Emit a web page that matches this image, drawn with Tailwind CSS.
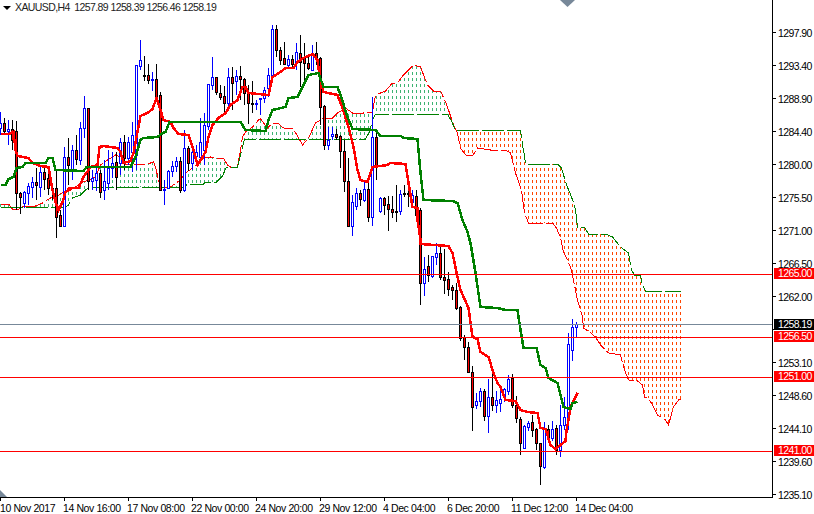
<!DOCTYPE html>
<html>
<head>
  <meta charset="UTF-8">
  <script src="https://cdn.jsdelivr.net/npm/@tailwindcss/browser@4"></script>
</head>
<body class="bg-white">
  <div class="relative w-[814px] h-[514px] overflow-hidden bg-white text-black font-['Liberation_Sans',sans-serif] text-[10.5px] leading-none tracking-[-0.6px]">
    <svg id="chart" class="absolute left-0 top-0" width="814" height="514" viewBox="0 0 814 514"></svg>

    <div class="absolute left-[3px] top-[2px] flex items-center h-[11px]">
      <span class="w-0 h-0 border-x-[4px] border-x-transparent border-t-[4px] border-t-black mr-[4px]"></span>
      <span class="text-[#222] whitespace-pre">XAUUSD,H4  1257.89 1258.39 1256.46 1258.19</span>
    </div>

    <div class="absolute left-[778px] top-[28px]">1297.90</div>
    <div class="absolute left-[778px] top-[61px]">1293.40</div>
    <div class="absolute left-[778px] top-[94px]">1288.90</div>
    <div class="absolute left-[778px] top-[127px]">1284.40</div>
    <div class="absolute left-[778px] top-[160px]">1280.00</div>
    <div class="absolute left-[778px] top-[193px]">1275.50</div>
    <div class="absolute left-[778px] top-[226px]">1271.00</div>
    <div class="absolute left-[778px] top-[259px]">1266.50</div>
    <div class="absolute left-[778px] top-[292px]">1262.00</div>
    <div class="absolute left-[778px] top-[358px]">1253.10</div>
    <div class="absolute left-[778px] top-[391px]">1248.60</div>
    <div class="absolute left-[778px] top-[424px]">1244.10</div>
    <div class="absolute left-[778px] top-[457px]">1239.60</div>
    <div class="absolute left-[778px] top-[490px]">1235.10</div>

    <div class="absolute left-[774px] top-[268px] w-[40px] h-[11px] bg-[#ff0000] text-white pl-[4px] flex items-center">1265.00</div>
    <div class="absolute left-[774px] top-[319px] w-[40px] h-[11px] bg-black text-white pl-[4px] flex items-center">1258.19</div>
    <div class="absolute left-[774px] top-[331px] w-[40px] h-[11px] bg-[#ff0000] text-white pl-[4px] flex items-center">1256.50</div>
    <div class="absolute left-[774px] top-[371px] w-[40px] h-[11px] bg-[#ff0000] text-white pl-[4px] flex items-center">1251.00</div>
    <div class="absolute left-[774px] top-[445px] w-[40px] h-[11px] bg-[#ff0000] text-white pl-[4px] flex items-center">1241.00</div>

    <div class="absolute left-0 top-[503px] flex whitespace-nowrap tracking-[-0.4px]">
      <div class="w-[63px]">10 Nov 2017</div>
      <div class="w-[64px]">14 Nov 16:00</div>
      <div class="w-[64px]">17 Nov 08:00</div>
      <div class="w-[64px]">22 Nov 00:00</div>
      <div class="w-[64px]">24 Nov 20:00</div>
      <div class="w-[64px]">29 Nov 12:00</div>
      <div class="w-[64px]">4 Dec 04:00</div>
      <div class="w-[64px]">6 Dec 20:00</div>
      <div class="w-[64px]">11 Dec 12:00</div>
      <div class="w-[64px]">14 Dec 04:00</div>
    </div>
  </div>

  <script>
    // candles, one every 4px: [high, top, bottom, low, up]
    const candles = [
      [112,123,128,135,1],[118,123,131,133,0],[120,129,131,145,1],[120,129,140,150,0],[121,131,193,210,0],
      [192,193,197,214,0],[191,192,203,208,1],[183,186,193,205,1],[177,182,187,198,1],[168,182,185,200,0],
      [165,172,187,197,1],[165,172,179,190,0],[168,178,188,195,0],[185,188,190,200,0],[170,188,217,238,0],
      [210,215,226,226,0],[147,157,226,227,1],[138,157,165,185,0],[145,150,169,180,1],[135,150,159,165,0],
      [122,128,160,165,1],[96,108,128,138,1],[108,108,181,190,0],[170,178,181,190,1],[165,173,180,191,1],
      [170,173,192,198,0],[160,181,190,200,1],[150,168,183,190,1],[152,163,168,178,1],[152,162,177,190,0],
      [138,142,163,175,1],[135,142,158,170,0],[137,142,158,165,1],[122,135,152,172,1],[65,65,155,170,1],
      [40,60,66,70,1],[56,75,76,81,0],[64,75,80,84,0],[72,79,80,91,1],[64,79,96,100,0],
      [92,95,190,191,0],[180,189,190,205,1],[170,171,188,189,1],[161,166,171,177,1],[157,161,166,172,1],
      [157,161,190,193,0],[130,148,190,192,1],[146,148,163,171,0],[144,152,163,170,1],[145,152,156,162,1],
      [118,142,157,163,1],[113,125,150,165,1],[84,84,126,130,1],[57,77,85,90,1],[77,77,92,95,0],
      [85,93,97,100,0],[86,96,103,113,0],[68,77,103,106,1],[67,77,83,110,0],[70,76,81,95,1],
      [66,76,79,100,0],[78,79,93,105,0],[85,93,103,124,0],[81,103,104,113,0],[100,103,104,110,1],
      [98,98,99,115,1],[87,90,98,103,1],[68,75,88,97,1],[25,29,75,78,1],[25,29,50,57,0],
      [47,50,60,65,0],[42,58,64,65,0],[55,59,65,67,1],[55,59,64,68,0],[43,52,63,70,1],
      [35,53,62,87,0],[43,58,63,80,0],[57,63,68,70,0],[45,53,70,70,1],[42,53,58,65,0],
      [57,58,107,125,0],[105,106,145,150,0],[127,140,145,150,1],[127,134,136,140,1],[129,134,137,140,0],
      [135,136,151,168,0],[140,151,181,192,0],[158,181,226,226,0],[195,202,226,236,1],[188,193,206,210,1],
      [190,193,199,206,0],[180,189,200,202,1],[180,189,217,222,0],[97,137,217,226,1],[130,137,167,180,0],
      [197,198,211,213,1],[197,198,205,215,0],[196,204,209,231,0],[196,209,212,218,0],[185,211,212,222,0],
      [190,194,211,215,1],[185,193,194,197,0],[187,193,194,207,0],[190,195,202,205,1],[190,196,215,220,0],
      [208,210,283,305,0],[257,269,283,296,1],[255,266,275,282,0],[258,256,276,278,1],[243,253,257,265,1],
      [244,253,277,280,0],[249,277,280,294,0],[272,279,289,296,0],[285,287,290,300,0],[283,290,308,310,0],
      [306,307,338,341,0],[335,337,347,360,0],[342,347,372,373,0],[366,372,407,431,0],[393,401,405,409,1],
      [388,391,401,407,1],[389,391,416,421,0],[379,397,416,433,1],[372,397,405,411,0],[391,400,405,413,1],
      [387,399,403,412,1],[388,389,397,402,1],[375,379,391,395,1],[374,378,405,408,0],[396,405,418,423,0],
      [417,419,443,455,0],[425,426,448,449,1],[421,423,427,431,1],[415,422,430,437,0],[428,429,443,450,0],
      [443,443,466,485,0],[422,428,467,469,1],[425,429,438,440,0],[421,429,438,441,1],[425,428,450,455,0],
      [405,425,450,457,1],[397,417,425,430,1],[333,344,417,430,1],[319,327,350,361,1],[322,324,327,337,1]
    ];

    const tenkan = [[0,134],[8,134],[13,132],[15,150],[17,156],[28,158],[32,163],[40,166],[48,167],[50,178],[52,190],[55,202],[58,210],[62,202],[65,192],[72,188],[78,188],[83,177],[90,167],[97,165],[99,147],[103,146],[117,148],[120,152],[123,163],[130,161],[133,153],[140,116],[147,113],[152,109],[156,98],[161,113],[163,120],[170,122],[173,128],[178,134],[188,135],[193,150],[197,165],[202,157],[205,152],[208,137],[212,125],[218,118],[225,113],[230,105],[237,100],[242,87],[245,87],[248,93],[268,95],[272,77],[280,72],[285,68],[293,68],[297,62],[303,58],[312,54],[317,60],[319,75],[323,92],[337,95],[342,108],[348,127],[353,147],[357,170],[360,180],[367,182],[372,167],[387,165],[390,163],[405,164],[408,183],[412,207],[417,208],[417,220],[420,240],[420,244],[448,246],[452,253],[457,277],[460,290],[468,308],[472,337],[477,339],[480,352],[488,357],[493,373],[497,383],[500,387],[505,400],[515,401],[520,410],[527,412],[537,413],[540,428],[545,429],[550,445],[555,449],[560,445],[565,441],[566,430],[568,420],[570,407],[577,393]];

    const kijun = [[0,185],[5,185],[8,179],[13,177],[16,168],[22,167],[25,163],[45,163],[48,158],[52,158],[55,170],[83,171],[86,167],[130,167],[135,157],[140,140],[143,138],[157,137],[162,133],[165,132],[169,122],[240,122],[245,130],[265,131],[268,120],[272,110],[285,107],[288,98],[297,97],[303,85],[308,75],[318,73],[323,87],[337,87],[340,95],[347,117],[352,129],[375,130],[380,136],[400,136],[403,138],[417,139],[420,173],[423,200],[452,201],[457,203],[462,220],[467,232],[470,243],[475,273],[480,307],[497,308],[505,310],[517,310],[520,330],[523,348],[536,348],[540,365],[545,368],[548,378],[557,383],[563,407],[570,409],[572,403],[577,402]];

    const spanA = [[0,204],[8,204],[12,209],[17,210],[20,208],[24,206],[35,206],[42,203],[50,198],[55,197],[63,192],[68,188],[75,187],[80,183],[88,180],[95,177],[100,165],[107,160],[115,155],[122,158],[125,165],[133,164],[147,164],[153,162],[155,167],[158,180],[160,187],[170,187],[180,180],[185,173],[192,168],[203,158],[210,157],[215,158],[223,158],[227,165],[230,167],[237,167],[240,150],[242,137],[245,132],[252,127],[258,120],[260,119],[267,128],[272,123],[277,123],[283,128],[293,129],[302,145],[308,138],[315,123],[323,118],[332,118],[337,113],[345,108],[352,113],[363,113],[372,112],[375,95],[385,91],[392,83],[397,83],[403,75],[413,65],[420,67],[427,85],[433,91],[440,91],[445,102],[448,110],[453,125],[457,133],[460,148],[465,155],[472,156],[477,148],[490,150],[505,150],[510,153],[515,173],[521,190],[524,213],[528,223],[552,223],[556,228],[560,238],[563,252],[567,260],[571,270],[574,285],[577,300],[582,317],[583,328],[589,332],[595,337],[600,345],[608,353],[620,355],[624,370],[628,380],[637,381],[642,385],[644,397],[648,398],[652,405],[657,415],[665,420],[668,425],[673,407],[678,400],[680,399]];

    const spanB = [[0,207],[65,207],[68,205],[72,198],[80,195],[85,190],[90,187],[155,187],[160,188],[185,187],[186,184],[203,184],[205,182],[216,182],[222,176],[226,167],[237,167],[240,155],[244,139],[365,139],[369,132],[372,120],[375,114],[444,114],[447,114],[451,121],[455,130],[520,130],[522,145],[524,155],[525,164],[557,164],[561,168],[566,185],[569,192],[574,205],[575,210],[576,218],[577,227],[584,227],[588,234],[605,234],[612,237],[620,247],[628,253],[631,270],[634,275],[640,275],[642,285],[645,291],[680,291]];

    function yAt(line, x) {
      for (let i = 1; i < line.length; i++) {
        if (x <= line[i][0]) {
          const a = line[i - 1], b = line[i];
          return a[1] + (b[1] - a[1]) * (x - a[0]) / ((b[0] - a[0]) || 1);
        }
      }
      return line[line.length - 1][1];
    }

    function poly(pts, color, w, dash) {
      return `<polyline points="${pts.map(p => (p[0] + 0.5) + ',' + p[1]).join(' ')}" fill="none" stroke="${color}" stroke-width="${w}" ${dash ? `stroke-dasharray="${dash}"` : ''} shape-rendering="crispEdges"/>`;
    }

    let out = '';

    // cloud hatching
    for (let x = 0; x <= 680; x += 4) {
      const a = Math.round(yAt(spanA, x)), b = Math.round(yAt(spanB, x));
      const top = Math.min(a, b), bottom = Math.max(a, b);
      const color = a < b ? '#3cb371' : '#ff4500';
      out += `<line x1="${x + 0.5}" y1="${top}" x2="${x + 0.5}" y2="${bottom}" stroke="${color}" stroke-dasharray="3 3" stroke-dashoffset="${top % 6}" shape-rendering="crispEdges"/>`;
    }
    out += poly(spanA, '#ff0000', 1, '22 3');
    out += poly(spanB, '#008000', 1, '22 3');

    // candles
    candles.forEach((c, i) => {
      const x = i * 4, [h, t, b, l, up] = c;
      const edge = up ? '#0000ff' : '#000000';
      out += `<rect x="${x}" y="${h}" width="1" height="${l - h}" fill="${edge}"/>`;
      out += `<rect x="${x - 1}" y="${t}" width="3" height="${b - t + 1}" fill="${edge}"/>`;
      if (b - t > 1) out += `<rect x="${x}" y="${t + 1}" width="1" height="${b - t - 1}" fill="${up ? '#ffffff' : '#ff0000'}"/>`;
    });

    out += poly(tenkan, '#ff0000', 2.5);
    out += poly(kijun, '#008000', 2.5);

    // price levels
    [274, 337, 377, 451].forEach(y => {
      out += `<rect x="0" y="${y}" width="772" height="1" fill="#ff0000"/>`;
    });
    out += `<rect x="0" y="324" width="772" height="1" fill="#778899"/>`;

    // axes and ticks
    out += `<rect x="772" y="0" width="1" height="498" fill="#000"/>`;
    out += `<rect x="0" y="497" width="773" height="1" fill="#000"/>`;
    for (let y = 32; y <= 494; y += 33) out += `<rect x="773" y="${y}" width="3" height="1" fill="#000"/>`;
    for (let x = 0; x <= 576; x += 64) out += `<rect x="${x}" y="497" width="1" height="4" fill="#000"/>`;

    // shift markers
    out += `<polygon points="560,0 575,0 567.5,7" fill="#778899"/>`;
    out += `<polygon points="0,490 7,497 0,497" fill="#778899"/>`;

    document.getElementById('chart').innerHTML = out;
  </script>
</body>
</html>
